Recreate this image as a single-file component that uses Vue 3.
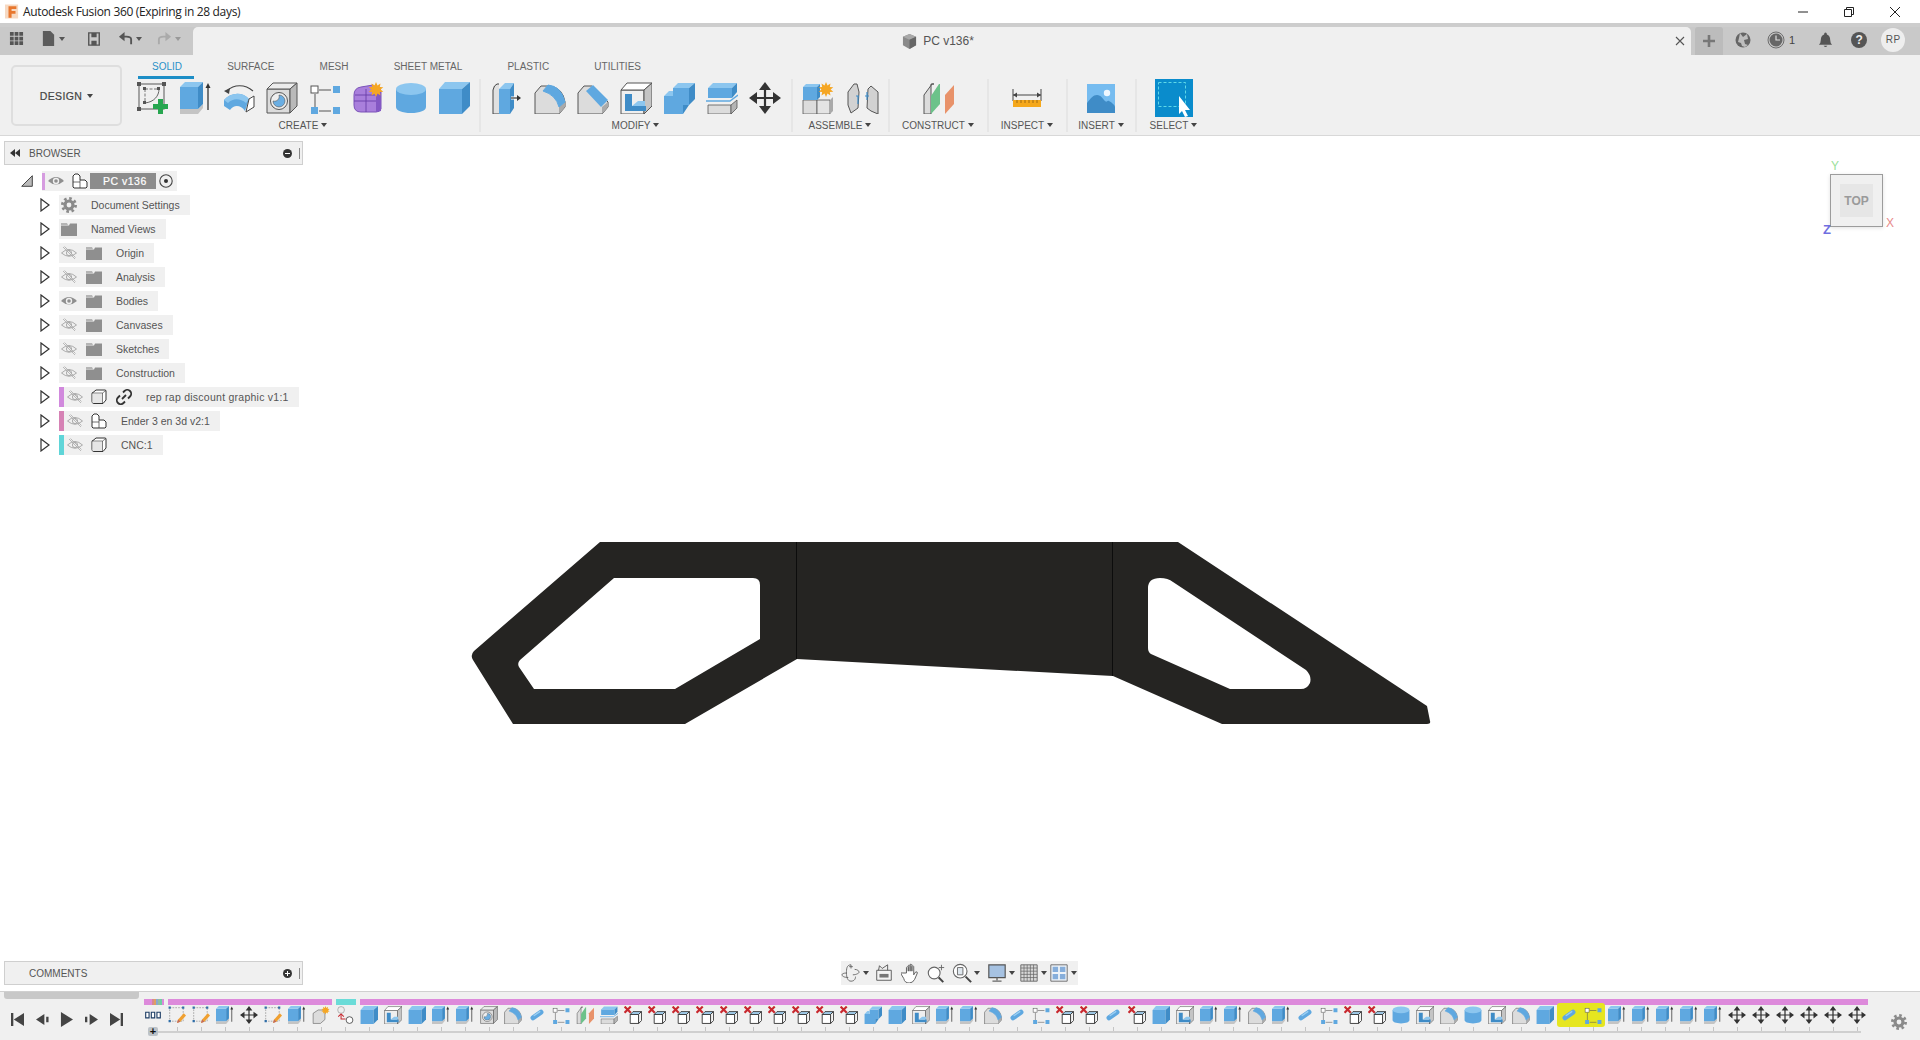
<script setup>
const tabs = ['SOLID', 'SURFACE', 'MESH', 'SHEET METAL', 'PLASTIC', 'UTILITIES']
const groups = [
  { label: 'CREATE', w: 353, cell: 43, icons: ['sketch', 'extrude', 'revolve', 'hole', 'pattern', 'form', 'cyl', 'box'] },
  { label: 'MODIFY', w: 312, cell: 43, icons: ['press', 'fillet', 'chamfer', 'shell', 'combine', 'split', 'move'] },
  { label: 'ASSEMBLE', w: 97, cell: 45, icons: ['newcomp', 'joint'] },
  { label: 'CONSTRUCT', w: 99, cell: 43, icons: ['plane'] },
  { label: 'INSPECT', w: 79, cell: 43, icons: ['ruler'] },
  { label: 'INSERT', w: 69, cell: 43, icons: ['picture'] },
  { label: 'SELECT', w: 74, cell: 43, icons: ['select'] }
]
const rows = [
  { label: 'Document Settings', icon: 'gear', kind: 'plain' },
  { label: 'Named Views', icon: 'folder', kind: 'plain' },
  { label: 'Origin', icon: 'folder', eye: 'eyeoff', kind: 'folder' },
  { label: 'Analysis', icon: 'folder', eye: 'eyeoff', kind: 'folder' },
  { label: 'Bodies', icon: 'folder', eye: 'eyeon', kind: 'folder' },
  { label: 'Canvases', icon: 'folder', eye: 'eyeoff', kind: 'folder' },
  { label: 'Sketches', icon: 'folder', eye: 'eyeoff', kind: 'folder' },
  { label: 'Construction', icon: 'folder', eye: 'eyeoff', kind: 'folder' },
  { label: 'rep rap discount graphic v1:1', icon: 'cube', eye: 'eyeoff', kind: 'comp', bar: '#d189dd', link: true },
  { label: 'Ender 3 en 3d v2:1', icon: 'comp', eye: 'eyeoff', kind: 'comp', bar: '#d682b5' },
  { label: 'CNC:1', icon: 'cube', eye: 'eyeoff', kind: 'comp', bar: '#5fd5d8' }
]
const rep = (name, n) => Array(n).fill(name)
const timeline = [
  'group', 'edit', 'edit', 'extrude', 'move', 'edit', 'extrude', 'sunbox', 'jointx', 'box', 'shell', 'box', 'extrude', 'extrude',
  'hole', 'fillet', 'pill', 'pattern', 'plane', 'split',
  ...rep('xcube', 10),
  'combine', 'box', 'shell', 'extrude', 'extrude', 'fillet', 'pill', 'pattern', 'xcube', 'xcube', 'pill', 'xcube',
  'box', 'shell', 'extrude', 'extrude', 'fillet', 'extrude', 'pill', 'pattern', 'xcube', 'xcube',
  'cyl', 'shell', 'fillet', 'cyl', 'shell', 'fillet', 'box', 'pill', 'pattern',
  ...rep('extrude', 5), ...rep('move', 6)
]
const navIcons = [
  { n: 'orbit', caret: true }, { n: 'capture' }, { n: 'hand' }, { n: 'zoomin' },
  { n: 'zoomfit', caret: true }, { n: 'display', caret: true }, { n: 'gridview', caret: true }, { n: 'views', caret: true }
]
</script>

<template>
  <div class="app">
    <svg class="defs" aria-hidden="true">
      <symbol id="sketch" viewBox="0 0 32 32">
        <rect x="2" y="2" width="25" height="25" fill="none" stroke="#666" stroke-width="1.1"/>
        <path d="M8 7H21M8 7V21" fill="none" stroke="#777" stroke-dasharray="3 1.5"/>
        <path d="M22 7C22 14 17 20 8 21" fill="none" stroke="#666"/>
        <path d="M0 0h4v4H0zM25 0h4v4h-4zM0 25h4v4H0zM6 5h3v3H6zM20 5h3v3h-3zM6 19h3v3H6z" fill="#555"/>
        <path d="M21 17h5v5h5v5h-5v5h-5v-5h-5v-5h5z" fill="#27a650"/>
      </symbol>
      <symbol id="extrude" viewBox="0 0 32 32">
        <path d="M0 27h18l5-5v4l-5 6H0z" fill="#c4c4c4"/>
        <path d="M0 5h18v22H0z" fill="#5fa8e0"/>
        <path d="M0 5l5-5h18l-5 5z" fill="#8cc6ef"/>
        <path d="M18 5l5-5v22l-5 5z" fill="#3f8cc7"/>
        <path d="M28 28V4" stroke="#333" stroke-width="1.3"/>
        <path d="M25.5 6L28 1l2.5 5z" fill="#333"/>
      </symbol>
      <symbol id="revolve" viewBox="0 0 32 32">
        <path d="M4 9C11 2 22 2 30 9" fill="none" stroke="#444" stroke-width="1.1"/>
        <path d="M1 9l6-3-1 6z" fill="#444"/>
        <path d="M1 18C8 10 20 10 26 17l-4 12C18 23 11 22 7 28L1 24z" fill="#5fa8e0"/>
        <path d="M1 18C8 10 20 10 26 17l-3 4C17 16 10 16 5 21z" fill="#8cc6ef"/>
        <path d="M26 17l5-3v11l-8 5z" fill="#fff" stroke="#444"/>
      </symbol>
      <symbol id="hole" viewBox="0 0 32 32">
        <path d="M1 7h23v24H1z" fill="#dcdcdc" stroke="#555"/>
        <path d="M1 7l6-6h24l-7 6z" fill="#ececec" stroke="#555"/>
        <path d="M24 7l7-6v23l-7 7z" fill="#b9b9b9" stroke="#555"/>
        <circle cx="13" cy="19" r="8.5" fill="#eee" stroke="#555"/>
        <path d="M13 13a6 6 0 1 1-6 6c4 1 7-2 6-6z" fill="#6aaee3" stroke="#555" stroke-width=".6"/>
      </symbol>
      <symbol id="pattern" viewBox="0 0 32 32">
        <path d="M10 8h12M6 12v13M10 29h12" stroke="#555"/>
        <rect x="2" y="4" width="7" height="7" fill="#fff" stroke="#555"/>
        <path d="M24 4h7v7h-7zM2 25h7v7H2zM24 25h7v7h-7z" fill="#5fa8e0"/>
      </symbol>
      <symbol id="form" viewBox="0 0 32 32">
        <path d="M2 13q0-7 7-8l12-2 8 6v18q-1 3-5 3H9q-7 0-7-7z" fill="#a97fdc" stroke="#7a52b8"/>
        <path d="M24 5h5v24l-5 1z" fill="#8458c4"/>
        <path d="M2 19h22M14 7v23M3 13h21" stroke="#6a3fa8" fill="none" stroke-width=".9"/>
        <path d="M24 0l1.500 3.500 3-2-.7 3.500 3.500.3-2.700 2.200 2.700 2.200-3.500.3.700 3.500-3-2-1.500 3.500-1.500-3.500-3 2 .7-3.500-3.500-.3 2.700-2.200-2.700-2.200 3.500-.3-.7-3.500 3 2z" fill="#f5a623"/>
      </symbol>
      <symbol id="cyl" viewBox="0 0 32 32">
        <path d="M1 7v18c0 3.500 6 6 15 6s15-2.500 15-6V7z" fill="#5fa8e0"/>
        <ellipse cx="16" cy="7" rx="15" ry="6" fill="#8cc6ef"/>
      </symbol>
      <symbol id="box" viewBox="0 0 32 32">
        <path d="M1 7h23v25H1z" fill="#5fa8e0"/>
        <path d="M1 7l6-7h25l-8 7z" fill="#8cc6ef"/>
        <path d="M24 7l8-7v24l-8 8z" fill="#3f8cc7"/>
      </symbol>
      <symbol id="press" viewBox="0 0 32 32">
        <path d="M8 2H6Q3 3 2 8v24h6" fill="#e0e0e0" stroke="#444"/>
        <path d="M8 7h11v25H8z" fill="#5fa8e0"/>
        <path d="M8 7l6-6h9l-4 6z" fill="#8cc6ef"/>
        <path d="M19 7l4-6v25l-4 6z" fill="#3f8cc7"/>
        <path d="M20 16h7" stroke="#fff" stroke-width="3"/>
        <path d="M20 16h7" stroke="#333" stroke-width="1.200"/>
        <path d="M26 13l4 3-4 3z" fill="#333"/>
      </symbol>
      <symbol id="fillet" viewBox="0 0 32 32">
        <path d="M1 11l6-7h9Q29 6 31 20v5l-6 7H1z" fill="#dcdcdc" stroke="#555"/>
        <path d="M25 25v7l6-7v-5z" fill="#aaa"/>
        <path d="M14 3q13 1 17 17l-6 5Q22 13 9 9z" fill="#5fa8e0" stroke="#5fa8e0"/>
      </symbol>
      <symbol id="chamfer" viewBox="0 0 32 32">
        <path d="M1 11l6-7h8l16 16v5l-6 7H1z" fill="#dcdcdc" stroke="#555"/>
        <path d="M25 25v7l6-7v-5z" fill="#aaa"/>
        <path d="M16 3l15 15-7 7L9 9z" fill="#5fa8e0"/>
      </symbol>
      <symbol id="shell" viewBox="0 0 32 32">
        <path d="M1 8h23v24H1z" fill="#efefef" stroke="#555"/>
        <path d="M1 8l6-7h25l-8 7z" fill="#fff" stroke="#555"/>
        <path d="M24 8l8-7v23l-8 8z" fill="#c4c4c4" stroke="#555"/>
        <path d="M5 12h7v12h14v5H5z" fill="#3f8cc7"/>
        <path d="M12 24l6-5h7v5z" fill="#8cc6ef"/>
      </symbol>
      <symbol id="combine" viewBox="0 0 32 32">
        <path d="M1 14H10V6H26V23H20V32H1Z" fill="#5fa8e0"/>
        <path d="M10 6l5-5h17l-6 5zM1 14l5-5h4v5z" fill="#8cc6ef"/>
        <path d="M26 6l6-5v16l-6 6zM20 23h6l-6 9z" fill="#3f8cc7"/>
      </symbol>
      <symbol id="split" viewBox="0 0 32 32">
        <path d="M2 6h24v10H2z" fill="#5fa8e0"/>
        <path d="M2 6l5-5h24l-5 5z" fill="#8cc6ef"/>
        <path d="M26 6l5-5v9l-5 6z" fill="#3f8cc7"/>
        <path d="M0 19h24l8-6" fill="none" stroke="#5fa8e0" stroke-width="1.400"/>
        <path d="M2 23h23v9H2z" fill="#dcdcdc" stroke="#555" stroke-width=".8"/>
        <path d="M25 23l6-5v8l-6 6z" fill="#b5b5b5" stroke="#555" stroke-width=".8"/>
      </symbol>
      <symbol id="move" viewBox="0 0 32 32">
        <path d="M16 3v26M3 16h26" stroke="#333" stroke-width="2.200"/>
        <path d="M16 0l6 8H10zM16 32l-6-8h12zM0 16l8-6v12zM32 16l-8 6V10z" fill="#333"/>
      </symbol>
      <symbol id="newcomp" viewBox="0 0 32 32">
        <path d="M1 18h14v14H1z" fill="#dcdcdc" stroke="#555" stroke-width=".8"/>
        <path d="M15 18h13v14H15z" fill="#e4e4e4" stroke="#555" stroke-width=".8"/>
        <path d="M28 18l3-3v14l-3 3z" fill="#aaa"/>
        <path d="M1 5h14v13H1z" fill="#5fa8e0"/>
        <path d="M1 5l3-3h14l-3 3z" fill="#8cc6ef"/>
        <path d="M15 5l3-3v13l-3 3z" fill="#3f8cc7"/>
        <path d="M24 0l1.500 3.500 3-2-.7 3.500 3.500.3-2.700 2.200 2.700 2.200-3.500.3.700 3.500-3-2-1.500 3.500-1.500-3.500-3 2 .7-3.500-3.500-.3 2.700-2.200-2.700-2.200 3.500-.3-.7-3.500 3 2z" fill="#f5a623"/>
      </symbol>
      <symbol id="joint" viewBox="0 0 32 32">
        <path d="M1 10l6-8h3l2 8-1 16-7 5-3-8z" fill="#d2d2d2" stroke="#555"/>
        <path d="M31 10l-7-6-3 3-1 19 4 3 7 3z" fill="#d2d2d2" stroke="#555"/>
        <path d="M11 14v8M20 10v8" stroke="#3f8cc7" stroke-width="1.200"/>
        <path d="M9 14h3M18 14h4" stroke="#3f8cc7"/>
      </symbol>
      <symbol id="plane" viewBox="0 0 32 32">
        <path d="M2 13L10 2h2l-3 0v30H2z" fill="#dcdcdc" stroke="#555"/>
        <path d="M9 14l8-12h1v20l-9 10z" fill="#6cc28a"/>
        <path d="M23 13l9-10v19l-9 10z" fill="#e8926a"/>
      </symbol>
      <symbol id="ruler" viewBox="0 0 32 32">
        <path d="M2 13h28M2 7v12M30 7v12" stroke="#444" fill="none"/>
        <path d="M2 13l4-2.500v5zM30 13l-4-2.500v5z" fill="#444"/>
        <path d="M2 18h28v7H2z" fill="#f5a81c"/>
        <path d="M6 18v3M10 18v3M14 18v3M18 18v3M22 18v3M26 18v3" stroke="#8a5a10" stroke-width=".8"/>
      </symbol>
      <symbol id="picture" viewBox="0 0 28 29">
        <path d="M0 0h28v29H0z" fill="#76bcf0"/>
        <path d="M0 19c4-5 6-8 10-8s6 4 8 6 2-1 4 0 6 4 6 6v6H0z" fill="#3f8cc7"/>
        <circle cx="20" cy="9" r="3.200" fill="#eef7ff"/>
      </symbol>
      <symbol id="select" viewBox="0 0 38 38">
        <path d="M0 0h38v38H0z" fill="#0a8ccc"/>
        <path d="M3.500 3.500h27v24h-27z" fill="none" stroke="#5fd8e8" stroke-dasharray="3 2"/>
        <path d="M24 17v18l3-3 3 6 3-1-3-6h5z" fill="#fff"/>
      </symbol>
      <symbol id="edit" viewBox="0 0 32 32">
        <rect x="3" y="3" width="24" height="24" fill="none" stroke="#777" stroke-dasharray="3 2"/>
        <path d="M1 1h4v4H1zM25 1h4v4h-4zM1 25h4v4H1z" fill="#2f6ea8"/>
        <path d="M28 13l4 4-10 11-6 2 2-6z" fill="#f0a030"/>
        <path d="M16 30l2-6 4 4z" fill="#c06a60"/>
      </symbol>
      <symbol id="pill" viewBox="0 0 32 32">
        <path d="M9 21L23 11" stroke="#5fa8e0" stroke-width="9" stroke-linecap="round"/>
        <path d="M11 17L21 10" stroke="#9ccff2" stroke-width="2.400" stroke-linecap="round"/>
      </symbol>
      <symbol id="xcube" viewBox="0 0 32 32">
        <path d="M1 1l11 11M12 1L1 12" stroke="#c8282e" stroke-width="3.800"/>
        <path d="M11 15h15v16H11z" fill="#fff" stroke="#333" stroke-width="1.600"/>
        <path d="M11 15l5-5h15l-5 5z" fill="#a6d4f4" stroke="#333" stroke-width="1.600"/>
        <path d="M26 15l5-5v16l-5 5z" fill="#fff" stroke="#333" stroke-width="1.600"/>
      </symbol>
      <symbol id="group" viewBox="0 0 32 32">
        <path d="M3 11h6v10H3zM13 11h6v10h-6zM23 11h6v10h-6z" fill="#fff" stroke="#1f3f66" stroke-width="2"/>
      </symbol>
      <symbol id="sunbox" viewBox="0 0 32 32">
        <path d="M2 13l9-6h12v17l-8 7H2z" fill="#dcdcdc" stroke="#555"/>
        <path d="M24 0l1.500 3.500 3-2-.7 3.500 3.500.3-2.700 2.200 2.700 2.200-3.500.3.700 3.500-3-2-1.500 3.500-1.500-3.500-3 2 .7-3.500-3.500-.3 2.700-2.200-2.700-2.200 3.500-.3-.7-3.500 3 2z" fill="#f5a623"/>
      </symbol>
      <symbol id="jointx" viewBox="0 0 32 32">
        <circle cx="9" cy="7" r="6" fill="#eee" stroke="#888"/>
        <circle cx="24" cy="25" r="6" fill="#fff" stroke="#444" stroke-width="1.500"/>
        <path d="M9 14v9h8" fill="none" stroke="#c8282e" stroke-width="1.800"/>
        <path d="M4 19l5-5 5 5" fill="none" stroke="#c8282e" stroke-width="1.800"/>
      </symbol>
      <symbol id="eyeon" viewBox="0 0 16 16">
        <path d="M0 8q8-8 16 0-8 7-16 0z" fill="#8f8f8f"/>
        <circle cx="8" cy="8" r="3.200" fill="#f0f0f0"/>
        <circle cx="8" cy="8" r="1.800" fill="#8f8f8f"/>
      </symbol>
      <symbol id="eyeoff" viewBox="0 0 16 16">
        <path d="M.5 8q7.500-7 15 0-7.500 6.500-15 0z" fill="none" stroke="#aaa"/>
        <circle cx="8" cy="8" r="2.600" fill="none" stroke="#aaa"/>
        <path d="M2 2l12 12M3.500 1.500l11 11" stroke="#aaa" stroke-width=".8"/>
      </symbol>
      <symbol id="folder" viewBox="0 0 16 14">
        <path d="M0 1h6l1 2H0z" fill="#b5b5b5"/>
        <path d="M0 3.500h8l1-2h7V14H0z" fill="#8f8f8f"/>
      </symbol>
      <symbol id="gear" viewBox="0 0 16 16">
        <circle cx="8" cy="8" r="4" fill="none" stroke="#8a8a8a" stroke-width="3.200"/>
        <circle cx="8" cy="8" r="6.600" fill="none" stroke="#8a8a8a" stroke-width="2.800" stroke-dasharray="2.600 2.580"/>
      </symbol>
      <symbol id="cube" viewBox="0 0 16 16">
        <path d="M1 4.500q0-1 1-1L5 1h9q1 0 1 1v9l-3 3.500H3q-2 0-2-2z" fill="#fff" stroke="#333"/>
        <path d="M1.500 4.500h10v9.500h-10z" fill="#e6e6e6"/>
        <path d="M11.500 4v10M1 4h10.500L15 1.500" fill="none" stroke="#333" stroke-width=".6"/>
      </symbol>
      <symbol id="comp" viewBox="0 0 16 16">
        <path d="M1 7V3l2-2h3l2 2v4h5l2 2v5l-1 1H2l-1-1z" fill="#fff" stroke="#333"/>
        <path d="M8 7v8M1 9h7" fill="none" stroke="#333" stroke-width=".7"/>
      </symbol>
      <symbol id="link" viewBox="0 0 16 16">
        <path d="M6 10l4-4" stroke="#333" stroke-width="1.800"/>
        <path d="M7 3.500l1.500-1.500a3 3 0 0 1 5.500 5.500L12 9.500M9 12.500L7.500 14A3 3 0 0 1 2 8.500l2-2" fill="none" stroke="#333" stroke-width="1.800"/>
      </symbol>
      <symbol id="radio" viewBox="0 0 16 16">
        <circle cx="8" cy="8" r="6.200" fill="none" stroke="#444" stroke-width="1.100"/>
        <circle cx="8" cy="8" r="2" fill="#333"/>
      </symbol>
      <symbol id="orbit" viewBox="0 0 22 22">
        <path d="M11 2c-5 0-5 5-5 9s1 9 5 9 5-3 5-5M6 11c-3 0-5 1-5 2s2 3 7 3M15 7c3 0 5 2 5 3s-3 3-7 3" fill="none" stroke="#666"/>
        <path d="M11 2v4M9 4h4" stroke="#666"/>
      </symbol>
      <symbol id="capture" viewBox="0 0 22 22">
        <path d="M3 8h16v11H3z" fill="#f4f4f4" stroke="#555"/>
        <path d="M5 8l1-5 3 3 6-4v6" fill="none" stroke="#555"/>
        <path d="M6 12h10v4H6z" fill="#777"/>
      </symbol>
      <symbol id="hand" viewBox="0 0 22 22">
        <path d="M6 11V5q1-2 2 0v4-6q1-2 2 0v6-7q1-2 2 0v7-5q1-2 2 0v9l2-3q2-1 2 1l-3 7q-2 4-6 4-5 0-6-5l-3-5q0-2 2-1z" fill="#fff" stroke="#555"/>
      </symbol>
      <symbol id="zoomin" viewBox="0 0 22 22">
        <circle cx="9" cy="11" r="6.500" fill="#fff" stroke="#666" stroke-width="1.200"/>
        <path d="M14 16l5 5" stroke="#444" stroke-width="2.200"/>
        <path d="M17 2v6M14 5h6" stroke="#666"/>
      </symbol>
      <symbol id="zoomfit" viewBox="0 0 22 22">
        <circle cx="9" cy="9" r="7.500" fill="#fff" stroke="#666" stroke-width="1.200"/>
        <path d="M6 5h6v8H6z" fill="#dfe7ee" stroke="#666"/>
        <path d="M15 15l6 6" stroke="#444" stroke-width="2.200"/>
      </symbol>
      <symbol id="display" viewBox="0 0 22 22">
        <path d="M2 2h18v14H2z" fill="#a6c2e2" stroke="#555" stroke-width="1.300"/>
        <path d="M11 16v3M6 20h10" stroke="#666" stroke-width="1.500"/>
      </symbol>
      <symbol id="gridview" viewBox="0 0 22 22">
        <path d="M2 2h18v18H2z" fill="#d8d8d8" stroke="#666"/>
        <path d="M5.500 2v18M9 2v18M12.500 2v18M16 2v18M2 5.500h18M2 9h18M2 12.500h18M2 16h18" stroke="#666" stroke-width=".8"/>
      </symbol>
      <symbol id="views" viewBox="0 0 22 22">
        <path d="M2 2h18v18H2z" fill="#eef3f8" stroke="#666"/>
        <path d="M4 4h6v6H4zM12 4h6v6h-6zM4 12h6v6H4zM12 12h6v6h-6z" fill="#86aedb"/>
      </symbol>
    </svg>

    <header class="titlebar">
      <svg class="logo" viewBox="0 0 16 16">
        <path d="M0 0h15v16H0z" fill="#f6d9c2"/>
        <path d="M4 2h9v3H7.500v2.500H12v3H7.500V15H4z" fill="#e8772e"/>
      </svg>
      <span class="apptitle">Autodesk Fusion 360 (Expiring in 28 days)</span>
      <span class="winctl">
        <svg viewBox="0 0 12 12"><path d="M1 6h10" stroke="#222"/></svg>
        <svg viewBox="0 0 12 12"><path d="M1.500 3.500h7v7h-7zM3.500 3.500v-2h7v7h-2" fill="none" stroke="#222"/></svg>
        <svg viewBox="0 0 12 12"><path d="M1 1l10 10M11 1L1 11" stroke="#222"/></svg>
      </span>
    </header>
    <div class="strip"></div>
    <div class="tabrow">
      <div class="qat">
        <svg class="q grid" viewBox="0 0 16 16"><path d="M1 1h4v4H1zM6 1h4v4H6zM11 1h4v4h-4zM1 6h4v4H1zM6 6h4v4H6zM11 6h4v4h-4zM1 11h4v4H1zM6 11h4v4H6zM11 11h4v4h-4z" fill="#555"/></svg>
        <svg class="q doc" viewBox="0 0 16 16"><path d="M2 0h8l4 4v12H2z" fill="#5c5c5c"/></svg><i class="caret qc"></i>
        <svg class="q save" viewBox="0 0 16 16"><path d="M2 1h12v14H2z" fill="none" stroke="#555" stroke-width="1.600"/><path d="M5 1h6v5H5zM5 10h6v5H5z" fill="#555"/></svg>
        <svg class="q undo" viewBox="0 0 16 16"><path d="M14 14V9Q14 6 9 6H3" fill="none" stroke="#555" stroke-width="2"/><path d="M7 1L1 6l6 5z" fill="#555"/></svg><i class="caret qc"></i>
        <svg class="q redo" viewBox="0 0 16 16"><path d="M2 14V9Q2 6 7 6h6" fill="none" stroke="#aaa" stroke-width="2"/><path d="M9 1l6 5-6 5z" fill="#aaa"/></svg><i class="caret qc pale"></i>
      </div>
      <div class="doctab">
        <span class="docname">
          <svg viewBox="0 0 16 16"><path d="M1 3l7-3 7 3v9l-7 4-7-4z" fill="#8a8a8a"/><path d="M1 3l7 3 7-3-7-3z" fill="#a8a8a8"/><path d="M8 6l7-3v9l-7 4z" fill="#666"/></svg>
          PC v136*
        </span>
        <svg class="tabclose" viewBox="0 0 10 10"><path d="M1 1l8 8M9 1L1 9" stroke="#555" stroke-width="1.100"/></svg>
      </div>
      <div class="hdright">
        <div class="newtab"><svg viewBox="0 0 14 14"><path d="M7 1v12M1 7h12" stroke="#777" stroke-width="2.600"/></svg></div>
        <svg class="hic net" viewBox="0 0 16 16"><circle cx="8" cy="8" r="7.500" fill="#666"/><path d="M5 1l3 4 4-3 1 5-4 1 1 4 3 1-3 2-3-1-1-3-3-1 1-4z" fill="#c8c8c8" opacity=".9"/></svg>
        <svg class="hic clock" viewBox="0 0 18 18"><circle cx="9" cy="9" r="8" fill="#c8c8c8" stroke="#555" stroke-width=".8"/><circle cx="9" cy="9" r="6.500" fill="#666"/><path d="M9 4.500V9h4" fill="none" stroke="#ddd" stroke-width="1.200"/></svg>
        <span class="count">1</span>
        <svg class="hic bell" viewBox="0 0 16 16"><path d="M8 0q1.500 0 1.500 2Q13 3 13 8q0 3 2 5H1q2-2 2-5 0-5 3.500-6Q6.500 0 8 0zM6 14h4q-2 3-4 0z" fill="#555"/></svg>
        <span class="help">?</span>
        <span class="avatar">RP</span>
      </div>
    </div>

    <div class="toolbar">
      <div class="design">DESIGN<i class="caret dc"></i></div>
      <div class="toolarea">
        <div class="tabs">
          <span v-for="(t, i) in tabs" :key="t" class="tab" :class="{ active: i === 0 }">{{ t }}</span>
        </div>
        <div class="groups">
          <div v-for="g in groups" :key="g.label" class="group" :style="{ width: g.w + 'px' }">
            <div class="gicons">
              <span v-for="ic in g.icons" :key="ic" class="cell" :style="{ width: g.cell + 'px' }">
                <svg :class="['ti', 'ti-' + ic]"><use :href="'#' + ic"/></svg>
              </span>
            </div>
            <div class="glabel">{{ g.label }}<i class="caret"></i></div>
          </div>
        </div>
      </div>
    </div>

    <main class="viewport">
      <svg class="part" viewBox="0 136 1920 855">
        <path fill-rule="evenodd" fill="#252422" d="M600 542H1178L1427 706 1430 721Q1431 724 1427 724H1222L1113 676 797 659 685 724H513L473 660Q470 655 474 651Z
          M614 578H753Q760 578 760 585V639L675 689H534L519 667Q517 663 520 660Z
          M1148 588Q1148 578 1160 578 1168 578 1173 582L1306 670Q1312 676 1310 683 1307 689 1301 689H1230L1151 654Q1148 652 1148 648Z"/>
        <path d="M796.500 542V659M1112.500 542V676" stroke="#0c0c0c" stroke-width="1"/>
      </svg>

      <section class="panel browser">
        <div class="phead">
          <svg class="back" viewBox="0 0 10 8"><path d="M5 0v8L0 4zM10 0v8L5 4z" fill="#333"/></svg>
          <span class="ptitle">BROWSER</span>
          <span class="pbtn minus"></span>
          <span class="phandle"></span>
        </div>
        <div class="tree">
          <div class="row root">
            <svg class="roottri" viewBox="0 0 12 12"><path d="M.7 11.300L11.300.7v10.600z" fill="#bbb" stroke="#444"/></svg>
            <span class="rootitem">
              <i class="bar rootbar"></i>
              <svg class="tic eye"><use href="#eyeon"/></svg>
              <span class="rootname">
                <span class="rooticon"><svg class="tic"><use href="#comp"/></svg></span>
                <b>PC v136</b>
              </span>
              <svg class="tic radio"><use href="#radio"/></svg>
            </span>
          </div>
          <div v-for="r in rows" :key="r.label" class="row">
            <svg class="tri" viewBox="0 0 10 14"><path d="M1 1l8 6-8 6z" fill="#fff" stroke="#333" stroke-width="1.200"/></svg>
            <span class="item" :class="r.kind">
              <i v-if="r.bar" class="bar" :style="{ background: r.bar }"></i>
              <span v-if="r.eye" class="eyecell"><svg class="tic eye"><use :href="'#' + r.eye"/></svg></span>
              <span class="iconcell"><svg class="tic"><use :href="'#' + r.icon"/></svg></span>
              <span v-if="r.link" class="linkcell"><svg class="tic"><use href="#link"/></svg></span>
              <span class="lbl" :class="{ wide: r.link }">{{ r.label }}</span>
            </span>
          </div>
        </div>
      </section>

      <section class="panel comments">
        <div class="phead">
          <span class="ptitle ctitle">COMMENTS</span>
          <span class="pbtn plus"></span>
          <span class="phandle"></span>
        </div>
      </section>

      <nav class="navbar">
        <span v-for="n in navIcons" :key="n.n" class="navitem">
          <svg :class="['nic', 'nic-' + n.n]"><use :href="'#' + n.n"/></svg>
          <i v-if="n.caret" class="caret nc"></i>
        </span>
      </nav>

      <div class="cube">
        <span class="axis ay">Y</span>
        <span class="axis ax">X</span>
        <span class="axis az">Z</span>
        <div class="face">TOP</div>
      </div>
    </main>

    <footer class="timeline">
      <div class="thumb"></div>
      <div class="transport">
        <svg viewBox="0 0 14 16"><path d="M0 1h2.500v14H0zM14 1v14L3 8z" fill="#444"/></svg>
        <svg viewBox="0 0 14 16"><path d="M0 8l9-6v12zM11 5h2.500v6H11z" fill="#444"/></svg>
        <svg viewBox="0 0 14 16"><path d="M1 0l13 8-13 8z" fill="#444"/></svg>
        <svg viewBox="0 0 14 16"><path d="M14 8L5 2v12zM0 5h2.500v6H0z" fill="#444"/></svg>
        <svg viewBox="0 0 14 16"><path d="M14 1h-2.500v14H14zM0 1v14l11-7z" fill="#444"/></svg>
      </div>
      <div class="track">
        <div class="strips">
          <span class="s s1"><i></i><i></i><i></i><i></i><i></i></span>
          <span class="s s2"></span>
          <span class="s s3"></span>
          <span class="s s4"></span>
        </div>
        <div class="tlicons">
          <span v-for="(ic, i) in timeline" :key="i" class="tlcell" :class="{ hot: i === 59 || i === 60, hotl: i === 59, hotr: i === 60 }">
            <svg class="tli"><use :href="'#' + ic"/></svg>
          </span>
        </div>
        <div class="ticks">
          <i v-for="(ic, i) in timeline" :key="i"></i>
        </div>
        <div class="tline"></div>
        <span class="addmark">+</span>
      </div>
      <svg class="tlgear"><use href="#gear"/></svg>
    </footer>
  </div>
</template>

<style scoped>
.app { width: 1920px; height: 1040px; display: flex; flex-direction: column; overflow: hidden; background: #fff; font-family: "Liberation Sans", Arial, sans-serif; font-size: 10px; color: #555; }
.defs { position: absolute; width: 0; height: 0; }
i { display: block; font-style: normal; }
.caret { display: inline-block; width: 0; height: 0; margin-left: 3px; vertical-align: 2px; border-left: 3px solid transparent; border-right: 3px solid transparent; border-top: 4px solid #444; }

.titlebar { height: 23px; display: flex; align-items: center; flex: none; padding-left: 5px; }
.logo { width: 14px; height: 15px; margin-right: 4px; }
.apptitle { font-family: "Open Sans", sans-serif; font-size: 12px; color: #222; letter-spacing: -.33px; }
.winctl { margin-left: auto; display: flex; gap: 34px; padding-right: 19px; }
.winctl svg { width: 12px; height: 12px; }
.strip { height: 4px; background: #cdcdcd; flex: none; }

.tabrow { height: 28px; display: flex; flex: none; background: #c9c9c9; }
.qat { width: 193px; display: flex; align-items: center; padding-left: 9px; box-sizing: border-box; }
.q { flex: none; }
.grid { width: 15px; height: 15px; margin-top: -5px; }
.doc { width: 15px; height: 17px; margin: -5px 0 0 17px; }
.qc { margin-left: 3px; margin-top: -5px; border-top-color: #555; }
.qc.pale { border-top-color: #999; }
.save { width: 14px; height: 16px; margin: -5px 0 0 22px; }
.undo { width: 15px; height: 15px; margin: -5px 0 0 17px; }
.redo { width: 15px; height: 15px; margin: -5px 0 0 15px; }
.doctab { flex: 1; background: #f0f0f0; border-radius: 5px 5px 0 0; position: relative; display: flex; align-items: center; justify-content: center; padding-right: 8px; }
.docname { display: flex; align-items: center; gap: 6px; font-size: 12px; color: #555; }
.docname svg { width: 15px; height: 17px; }
.tabclose { position: absolute; right: 6px; top: 9px; width: 10px; height: 10px; }
.hdright { width: 229px; display: flex; align-items: center; position: relative; flex: none; padding-left: 4px; box-sizing: border-box; }
.newtab { width: 28px; height: 28px; background: #bcbcbc; border-radius: 3px 3px 0 0; display: flex; align-items: center; justify-content: center; }
.newtab svg { width: 14px; height: 14px; }
.hic { flex: none; }
.net { width: 16px; height: 16px; margin-left: 12px; margin-top: -3px; }
.clock { width: 18px; height: 18px; margin-left: 16px; margin-top: -3px; }
.count { font-size: 11px; color: #444; margin-left: 4px; margin-top: -3px; }
.bell { width: 15px; height: 16px; margin-left: 23px; margin-top: -3px; }
.help { width: 16px; height: 16px; margin-left: 18px; margin-top: -3px; border-radius: 50%; background: #555; color: #eee; font-weight: 700; font-size: 12px; line-height: 16px; text-align: center; }
.avatar { width: 24px; height: 24px; margin-left: 14px; margin-top: -3px; border-radius: 50%; background: #eee; color: #555; font-size: 10px; line-height: 24px; text-align: center; letter-spacing: .5px; }

.toolbar { height: 81px; box-sizing: border-box; background: #f0f0f0; border-bottom: 1px solid #d8d8d8; display: flex; flex: none; }
.design { width: 111px; height: 61px; margin: 10px 0 0 11px; box-sizing: border-box; border: 2px solid #dedede; border-radius: 5px; display: flex; align-items: center; justify-content: center; font-size: 10.500px; color: #444; letter-spacing: .4px; -webkit-text-stroke: .2px #444; }
.dc { margin-left: 5px; }
.toolarea { display: flex; flex-direction: column; }
.tabs { height: 24px; display: flex; padding-left: 7.400px; }
.tab { position: relative; padding: 6px 22.600px 0; color: #666; line-height: 12px; box-sizing: border-box; }
.tab.active { color: #2a90c8; }
.tab.active::after { content: ""; position: absolute; left: 8.600px; right: 10.400px; bottom: 0; height: 3px; background: #1d8ec6; }
.groups { display: flex; margin-left: 5.500px; }
.group { flex: none; box-sizing: border-box; border-right: 2px solid #e6e6e6; display: flex; flex-direction: column; align-items: center; height: 53px; }
.group:last-child { border-right: 0; }
.gicons { display: flex; flex: none; height: 38px; align-items: center; }
.cell { display: flex; justify-content: center; align-items: center; }
.ti { width: 32px; height: 32px; display: block; }
.ti-select { width: 38px; height: 38px; }
.ti-picture { width: 28px; height: 29px; }
.glabel { color: #555; line-height: 12px; margin-top: 3px; flex: none; }

.viewport { position: relative; flex: 1; min-height: 0; }
.part { position: absolute; left: 0; top: 0; width: 1920px; height: 855px; }
.panel { position: absolute; left: 4px; width: 299px; }
.browser { top: 5px; }
.comments { bottom: 6px; }
.phead { height: 24px; box-sizing: border-box; background: #f0f0f0; border: 1px solid #cfcfcf; display: flex; align-items: center; position: relative; }
.back { width: 10px; height: 8px; margin-left: 5px; }
.ptitle { margin-left: 9px; color: #555; }
.ctitle { margin-left: 24px; }
.pbtn { margin-left: auto; margin-right: 10px; width: 9px; height: 9px; border-radius: 50%; background: #333; position: relative; }
.pbtn::before { content: ""; position: absolute; left: 2px; right: 2px; top: 4px; height: 1px; background: #fff; }
.plus::after { content: ""; position: absolute; top: 2px; bottom: 2px; left: 4px; width: 1px; background: #fff; }
.phandle { position: absolute; right: 2px; top: 6px; height: 11px; width: 1px; background: #888; }
.tree { margin-top: 4px; margin-left: -4px; }
.row { height: 24px; display: flex; align-items: center; padding-left: 40px; box-sizing: border-box; }
.tri { width: 10px; height: 14px; flex: none; margin-right: 9px; }
.item { height: 20px; display: flex; align-items: center; background: #f0f0f0; padding-right: 10px; flex: none; }
.lbl { font-size: 10.500px; color: #555; white-space: nowrap; }
.lbl.wide { letter-spacing: .25px; }
.tic { width: 16px; height: 16px; display: block; }
.eyecell { width: 20px; display: flex; justify-content: center; }
.folder .iconcell { width: 30px; display: flex; justify-content: center; }
.folder .lbl { margin-left: 7px; }
.plain .iconcell { width: 20px; display: flex; justify-content: center; }
.plain .lbl { margin-left: 12px; }
.comp .iconcell { width: 28px; display: flex; justify-content: center; }
.comp .lbl { margin-left: 8px; }
.comp .eyecell { width: 21px; }
.linkcell { width: 22px; display: flex; justify-content: center; }
.linkcell + .lbl { margin-left: 11px; }
.bar { width: 5px; height: 20px; flex: none; }
.root { padding-left: 21px; }
.roottri { width: 12px; height: 12px; margin-right: 9px; flex: none; }
.rootitem { display: flex; align-items: center; background: #f0f0f0; height: 20px; width: 135px; flex: none; }
.rootbar { width: 3px; height: 17px; background: #d69ce0; }
.rootitem .eye { margin-left: 3px; }
.rootname { margin-left: 6px; width: 86px; height: 16px; background: #8c8c8c; display: flex; align-items: center; flex: none; }
.rooticon { width: 20px; height: 16px; background: #f0f0f0; display: flex; justify-content: center; }
.rootname b { color: #fff; font-size: 10.500px; font-weight: 400; letter-spacing: .5px; margin-left: 13px; -webkit-text-stroke: .2px #fff; }
.radio { margin-left: 2px; }

.navbar { position: absolute; left: 841px; bottom: 6px; width: 237px; height: 24px; background: #f0f0f0; display: flex; align-items: center; padding-left: 0; box-sizing: border-box; }
.navitem { display: flex; align-items: center; }
.nic { width: 20px; height: 20px; display: block; }
.nc { margin-left: 2px; }
.nic-capture { margin-left: 5px; }
.nic-hand { margin-left: 7px; }
.nic-zoomin { margin-left: 5px; }
.nic-zoomfit { margin-left: 6px; }
.nic-display { margin-left: 7px; }
.nic-gridview { margin-left: 4px; }
.nic-views { margin-left: 2px; }

.cube { position: absolute; left: 1830px; top: 38px; width: 53px; height: 53px; box-sizing: border-box; background: #f0f0f0; border: 1px solid #9c9c9c; box-shadow: 0 1px 4px rgba(0,0,0,.12); display: flex; align-items: center; justify-content: center; }
.face { width: 33px; height: 33px; background: #e6e6e6; color: #9a9a9a; font-size: 12px; font-weight: 700; display: flex; align-items: center; justify-content: center; }
.axis { position: absolute; font-size: 12px; }
.ay { left: 0; top: -16px; color: #9adf9a; }
.ax { left: 55px; top: 41px; color: #e88a8a; }
.az { left: -8px; top: 47px; color: #6f6fe0; font-weight: 700; font-size: 13px; }

.timeline { height: 49px; box-sizing: border-box; flex: none; background: #f0f0f0; border-top: 1px solid #d0d0d0; display: flex; position: relative; }
.thumb { position: absolute; left: 4px; top: 0; width: 135px; height: 7px; background: #c8c8c8; border-radius: 0 0 3px 3px; }
.transport { width: 141px; flex: none; display: flex; align-items: center; padding: 7px 0 0 11px; box-sizing: border-box; gap: 11.700px; }
.transport svg { width: 13px; height: 15px; flex: none; }
.track { width: 1728px; flex: none; position: relative; padding-top: 7px; }
.strips { display: flex; gap: 4px; height: 6px; margin-left: 3px; }
.s { display: block; height: 6px; }
.s1 { width: 20px; display: flex; background: #dd8adb; padding-left: 8px; box-sizing: border-box; }
.s1 i { width: 2px; height: 6px; background: #d88a90; }
.s1 i:nth-child(2) { background: #e0a060; }
.s1 i:nth-child(3) { background: #8aa8d0; }
.s1 i:nth-child(4) { background: #90c0a0; }
.s1 i:nth-child(5) { background: #70d0a0; }
.s2 { width: 164px; background: #dd8adb; }
.s3 { width: 20px; background: #6bdcd8; }
.s4 { width: 1508px; background: #dd8adb; }
.tlicons { display: flex; height: 24px; margin-top: -2px; position: relative; }
.tlcell { width: 24px; height: 24px; flex: none; display: flex; align-items: center; justify-content: center; }
.hot { background: #e6e620; }
.hotl { border-radius: 3px 0 0 3px; }
.hotr { border-radius: 0 3px 3px 0; }
.tli { width: 18px; height: 18px; }
.ticks { display: flex; height: 4px; }
.ticks i { width: 24px; flex: none; height: 4px; position: relative; }
.ticks i::before { content: ""; position: absolute; left: 12px; top: 0; width: 1px; height: 4px; background: #c4c4c4; }
.tline { height: 2px; margin: 0 8px 0 14px; background: #cfcfcf; }
.addmark { position: absolute; left: 7px; top: 35px; width: 10px; height: 9px; line-height: 9px; text-align: center; background: #bcc2c8; border-radius: 2px; color: #111; font-size: 11px; font-weight: 700; }
.tlgear { position: absolute; right: 13px; top: 22px; width: 16px; height: 16px; }
</style>

<style>
html, body { margin: 0; padding: 0; background: #fff; }
</style>
